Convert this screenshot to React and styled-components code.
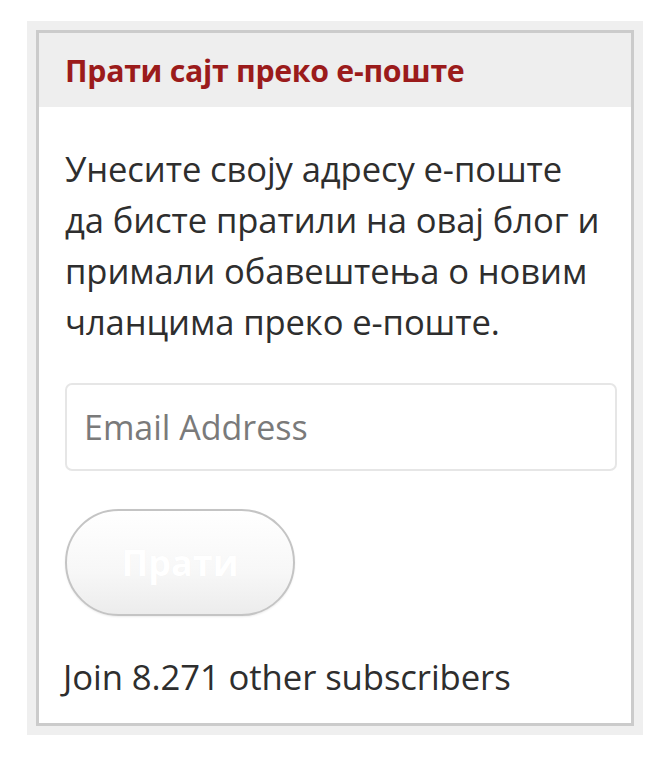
import React from "react";
import styled, { createGlobalStyle } from "styled-components";

const Global = createGlobalStyle`
  html, body { margin: 0; padding: 0; background: #ffffff; }
  body { font-family: "Open Sans", "Noto Sans", sans-serif; }
  * { box-sizing: border-box; }
`;

const Frame = styled.div`
  margin: 21px 0 0 27px;
  width: 616px;
  height: 714px;
  padding: 9px;
  background: #efefef;
`;

const Widget = styled.section`
  height: 100%;
  border: 3px solid #cbcbcb;
  background: #ffffff;
  display: flex;
  flex-direction: column;
`;

const Header = styled.header`
  height: 74px;
  background: #eeeeee;
  display: flex;
  align-items: center;
  padding-left: 26px;
`;

const Title = styled.h2`
  margin: 0;
  font-family: "Open Sans", sans-serif;
  font-weight: 700;
  font-size: 30.3px;
  color: #9b1b1b;
  letter-spacing: -0.3px;
`;

const Body = styled.div`
  padding: 36px 17px 0 26px;
  display: flex;
  flex-direction: column;
`;

const Text = styled.p`
  margin: 0;
  font-size: 34.6px;
  line-height: 51px;
  color: #2e2e2e;
  letter-spacing: -0.1px;
`;

const EmailInput = styled.input`
  margin-top: 36px;
  width: 552px;
  height: 88px;
  border: 2px solid #e6e6e6;
  border-radius: 7px;
  padding: 0 17px;
  font-family: "Open Sans", sans-serif;
  font-size: 34px;
  color: #333;
  background: #fff;
  outline: none;
  &::placeholder { color: #7a7a7a; }
`;

const SubmitButton = styled.button`
  margin-top: 38px;
  width: 230px;
  height: 107px;
  border-radius: 54px;
  border: 2px solid #c4c4c4;
  background: linear-gradient(#ffffff 0%, #f7f7f7 60%, #ececec 100%);
  color: #ffffff;
  font-family: "Open Sans", sans-serif;
  font-weight: 700;
  font-size: 36px;
  box-shadow: 0 1px 2px rgba(0,0,0,0.08);
  text-shadow: 0 0 1px rgba(0,0,0,0.04);
`;

const Subscribers = styled.p`
  margin: 35px 0 0 -2px;
  font-size: 34.7px;
  line-height: 51px;
  color: #2e2e2e;
  letter-spacing: -0.1px;
`;

export default function App() {
  return (
    <>
      <Global />
      <Frame>
        <Widget>
          <Header>
            <Title>Прати сајт преко е-поште</Title>
          </Header>
          <Body>
            <Text>
              Унесите своју адресу е-поште
              <br />
              да бисте пратили на овај блог и
              <br />
              примали обавештења о новим
              <br />
              чланцима преко е-поште.
            </Text>
            <EmailInput type="email" placeholder="Email Address" />
            <SubmitButton type="button">Прати</SubmitButton>
            <Subscribers>Join 8.271 other subscribers</Subscribers>
          </Body>
        </Widget>
      </Frame>
    </>
  );
}
